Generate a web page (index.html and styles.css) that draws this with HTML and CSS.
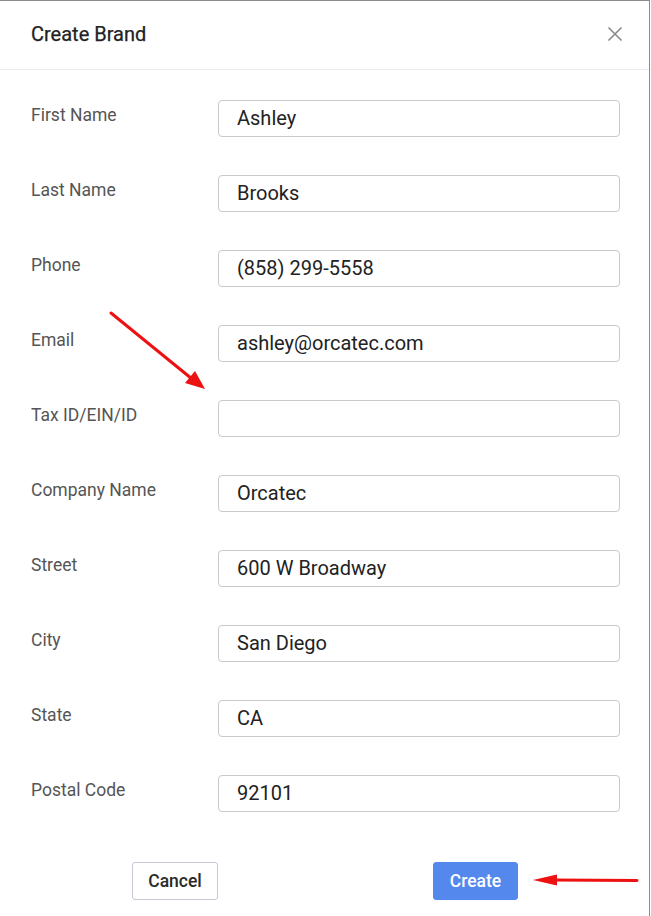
FILE: index.html
```html
<!DOCTYPE html>
<html lang="en">
<head>
<meta charset="utf-8">
<title>Create Brand</title>
<link rel="stylesheet" href="styles.css">
</head>
<body>
<div class="modal">
  <div class="modal-header">
    <h5 class="modal-title">Create Brand</h5>
    <button class="close" type="button" aria-label="Close">
      <svg width="16" height="16" viewBox="0 0 16 16"><path d="M1.5 1.5 L14.5 14.5 M14.5 1.5 L1.5 14.5" stroke="#8a8a8a" stroke-width="1.6" fill="none"/></svg>
    </button>
  </div>
  <form class="modal-body">
    <div class="row"><label class="label">First Name</label><input class="input" value="Ashley"></div>
    <div class="row"><label class="label">Last Name</label><input class="input" value="Brooks"></div>
    <div class="row"><label class="label">Phone</label><input class="input" value="(858) 299-5558"></div>
    <div class="row"><label class="label">Email</label><input class="input" value="ashley@orcatec.com"></div>
    <div class="row"><label class="label">Tax ID/EIN/ID</label><input class="input" value=""></div>
    <div class="row"><label class="label">Company Name</label><input class="input" value="Orcatec"></div>
    <div class="row"><label class="label">Street</label><input class="input" value="600 W Broadway"></div>
    <div class="row"><label class="label">City</label><input class="input" value="San Diego"></div>
    <div class="row"><label class="label">State</label><input class="input" value="CA"></div>
    <div class="row"><label class="label">Postal Code</label><input class="input" value="92101"></div>
  </form>
  <div class="modal-footer">
    <button class="btn btn-cancel" type="button">Cancel</button>
    <button class="btn btn-create" type="button">Create</button>
  </div>
  <svg class="annot annot-1" width="110" height="90" viewBox="0 0 110 90">
    <path d="M2 2 L88 72" stroke="#ee1111" stroke-width="3" stroke-linecap="round" fill="none"/>
    <path d="M96 78 L76 72 L86 60 Z" fill="#ee1111"/>
  </svg>
  <svg class="annot annot-2" width="110" height="16" viewBox="0 0 110 16">
    <path d="M20 8 L104 8.5" stroke="#ee1111" stroke-width="3" stroke-linecap="round" fill="none"/>
    <path d="M0 8 L24 2.5 L24 13.5 Z" fill="#ee1111"/>
  </svg>
</div>
</body>
</html>
```
FILE: styles.css
```css
* { box-sizing: border-box; }
html, body { margin: 0; padding: 0; background: #fff; }
body {
  font-family: Roboto, "Noto Sans", Arial, sans-serif;
  width: 651px;
  height: 916px;
  overflow: hidden;
}
.modal {
  position: relative;
  width: 650px;
  height: 916px;
  border-top: 1px solid #8c8c8c;
  border-right: 1px solid #8c8c8c;
  background: #fff;
}
.modal-header {
  display: flex;
  align-items: center;
  justify-content: space-between;
  height: 69px;
  padding: 0 26px 2px 31px;
  border-bottom: 1px solid #e9ecef;
}
.modal-title {
  margin: 0;
  font-size: 20px;
  font-weight: 400;
  line-height: 24px;
  color: #222;
  -webkit-text-stroke: 0.25px #222;
}
.close {
  border: 0;
  background: transparent;
  padding: 0;
  width: 16px;
  height: 16px;
  display: flex;
}
.modal-body {
  display: flex;
  flex-direction: column;
  gap: 38px;
  padding: 30px 29px 0 31px;
  margin: 0;
}
.row {
  display: flex;
  align-items: flex-start;
  height: 37px;
}
.label {
  width: 187px;
  flex: none;
  font-size: 17.5px;
  line-height: 24px;
  padding-top: 3px;
  color: #555;
}
.input {
  width: 403px;
  height: 37px;
  border: 1px solid #c9c9c9;
  border-radius: 4px;
  padding: 0 12px 1px 18px;
  font-family: Roboto, "Noto Sans", Arial, sans-serif;
  font-size: 20px;
  color: #222;
  background: #fff;
  outline: none;
}
.modal-footer {
  display: flex;
  justify-content: space-between;
  padding: 50px 131px 0 132px;
}
.btn {
  height: 38px;
  border-radius: 3px;
  font-family: Roboto, "Noto Sans", Arial, sans-serif;
  font-size: 17.5px;
  font-weight: 500;
  padding: 0;
  cursor: pointer;
}
.btn-cancel {
  width: 86px;
  background: #fff;
  border: 1px solid #c8c8d6;
  color: #2a2a2a;
}
.btn-create {
  width: 85px;
  background: #5488ec;
  border: 1px solid #5488ec;
  color: #fff;
}
.annot {
  position: absolute;
  pointer-events: none;
}
.annot-1 { left: 109px; top: 310px; }
.annot-2 { left: 533px; top: 871px; }
```
